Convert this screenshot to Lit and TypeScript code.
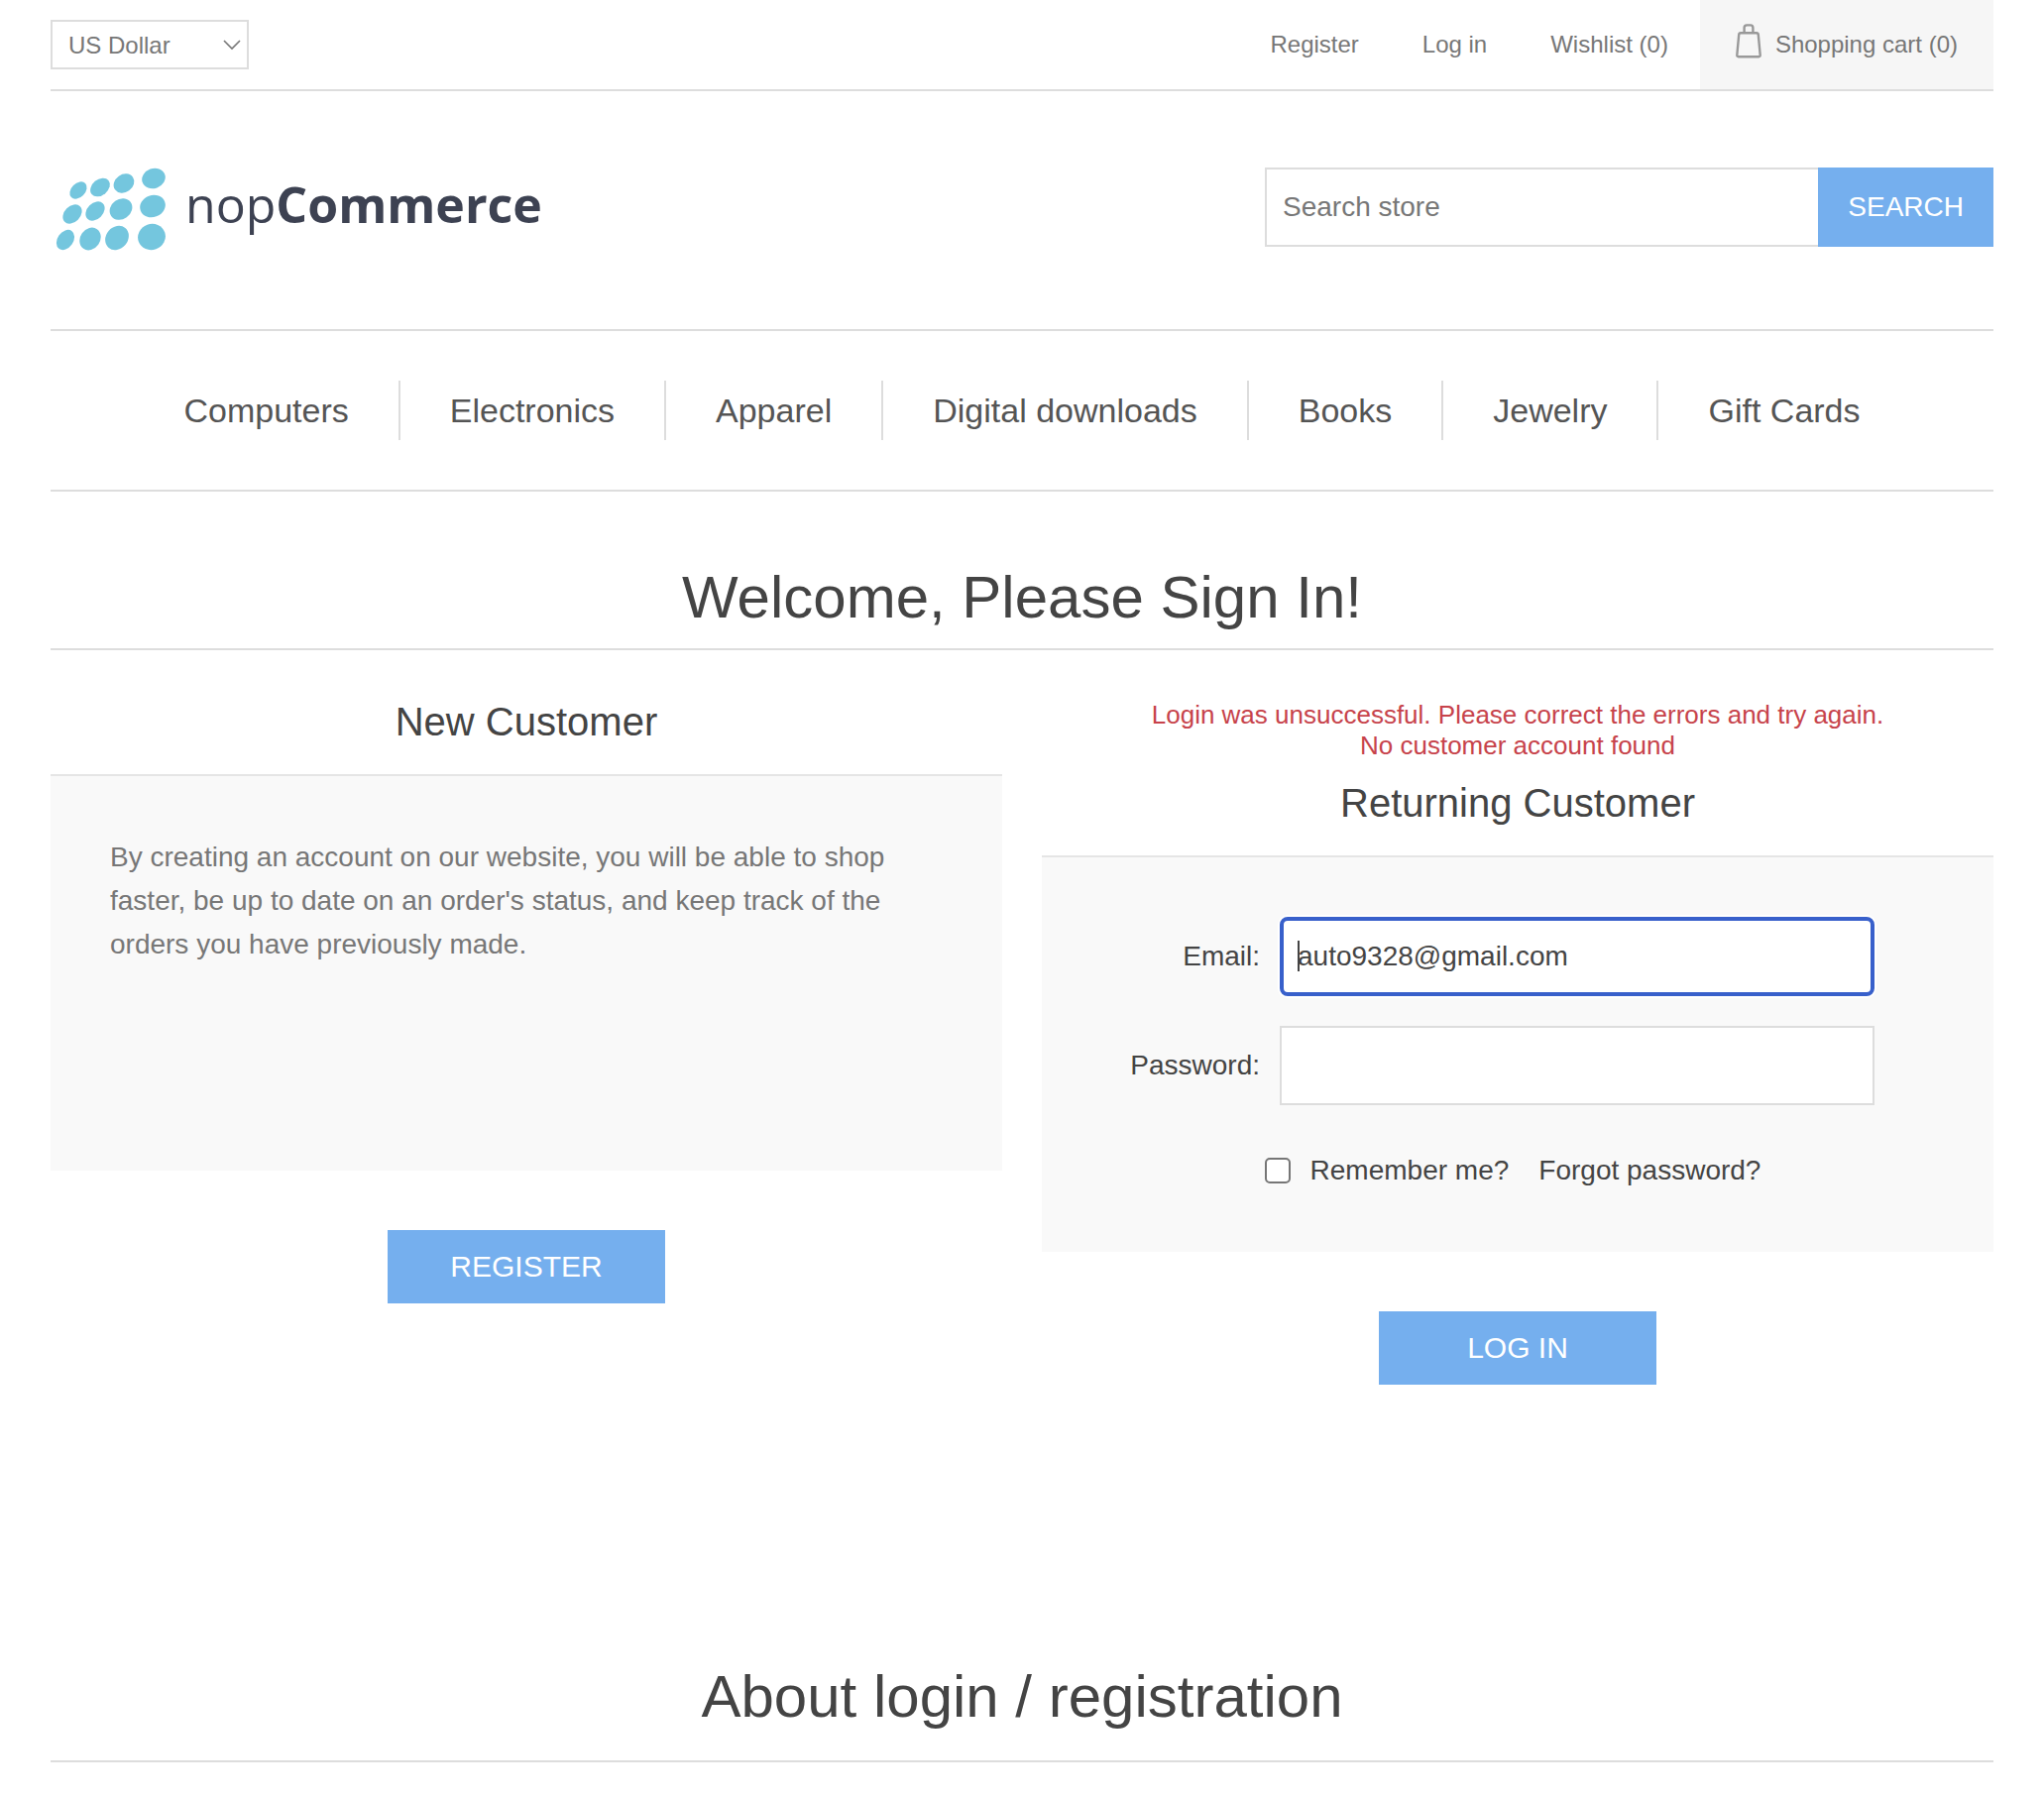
import { LitElement, html, css, svg } from "lit";
import { customElement, state } from "lit/decorators.js";

const CATEGORIES = [
  "Computers",
  "Electronics",
  "Apparel",
  "Digital downloads",
  "Books",
  "Jewelry",
  "Gift Cards",
];

/* Logo dots: centre x, centre y, long radius, short radius, rotation */
const DOTS: [number, number, number, number, number][] = [
  [28, 23, 10, 7, -45],
  [50, 20, 11, 8, -40],
  [74, 16, 11, 9, -35],
  [104, 11, 12, 10, -20],
  [22, 47, 11, 8, -45],
  [45, 44, 11, 8, -45],
  [71, 42, 12, 10, -35],
  [103, 39, 13, 11, -20],
  [15, 73, 11, 8, -55],
  [40, 72, 12, 10, -55],
  [67, 71, 13, 11, -50],
  [102, 70, 14, 13, -20],
];

@customElement("shop-header")
export class ShopHeader extends LitElement {
  static styles = css`
    :host {
      display: block;
    }
    .upper {
      display: flex;
      justify-content: space-between;
      align-items: center;
      flex-wrap: wrap;
      border-bottom: 2px solid #ddd;
      font-size: 24px;
      color: #777;
    }
    .currency {
      position: relative;
    }
    .currency select {
      appearance: none;
      box-sizing: border-box;
      width: 200px;
      height: 50px;
      padding: 0 16px;
      border: 2px solid #ddd;
      border-radius: 0;
      background: #fff;
      font: inherit;
      color: inherit;
    }
    .chevron {
      position: absolute;
      right: 8px;
      top: 20px;
      pointer-events: none;
    }
    .links {
      display: flex;
      flex-wrap: wrap;
      list-style: none;
      margin: 0;
      padding: 0;
      line-height: 90px;
    }
    .links a {
      display: block;
      padding: 0 32px;
      color: inherit;
      text-decoration: none;
    }
    .links .cart {
      display: flex;
      gap: 14px;
      padding: 0 36px;
      background: #f6f6f6;
    }
    .bag {
      margin-top: 24px;
    }
    .lower {
      display: flex;
      justify-content: space-between;
      align-items: flex-start;
      flex-wrap: wrap;
      gap: 24px;
      padding: 77px 0 79px;
    }
    .logo {
      display: block;
      height: 84px;
    }
    .wordmark {
      font-family: "Open Sans", "Noto Sans", sans-serif;
      font-size: 50px;
      fill: #3d4252;
    }
    .strong {
      font-weight: 700;
    }
    .search {
      display: flex;
      flex: 0 1 735px;
      height: 80px;
    }
    .search input {
      flex: 1;
      min-width: 0;
      box-sizing: border-box;
      padding: 0 16px;
      border: 2px solid #ddd;
      border-right: 0;
      border-radius: 0;
      font: inherit;
      font-size: 28px;
      color: #777;
    }
    .search input::placeholder {
      color: #777;
      opacity: 1;
    }
    .search button {
      padding: 0 30px;
      border: 0;
      background: #75afee;
      color: #fff;
      font: inherit;
      font-size: 28px;
      text-transform: uppercase;
    }
    .menu {
      display: flex;
      flex-wrap: wrap;
      justify-content: center;
      list-style: none;
      margin: 0;
      padding: 50px 0;
      border-top: 2px solid #ddd;
      border-bottom: 2px solid #ddd;
      font-size: 34px;
      line-height: 60px;
    }
    .menu li + li {
      border-left: 2px solid #ddd;
    }
    .menu a {
      display: block;
      padding: 0 50px;
      color: #555;
      text-decoration: none;
    }
  `;

  render() {
    return html`
      <header>
        <div class="upper">
          <div class="currency">
            <select aria-label="Currency">
              <option selected>US Dollar</option>
              <option>Euro</option>
            </select>
            <svg class="chevron" width="18" height="11" viewBox="0 0 18 11" fill="none" stroke="#777" stroke-width="1.6">
              <path d="M1 1L9 9L17 1" />
            </svg>
          </div>
          <ul class="links">
            <li><a href="#register">Register</a></li>
            <li><a href="#login">Log in</a></li>
            <li><a href="#wishlist">Wishlist (0)</a></li>
            <li>
              <a class="cart" href="#cart">
                <svg class="bag" width="26" height="36" viewBox="0 0 26 36" fill="none" stroke="#999" stroke-width="2.4" stroke-linejoin="round">
                  <path d="M5 9.2H21Q22.6 9.2 22.8 11L24.7 31.5Q24.8 33.2 23.2 33.2H2.8Q1.2 33.2 1.3 31.5L3.2 11Q3.4 9.2 5 9.2Z" />
                  <path d="M8.6 9V4Q8.6 1.4 11.2 1.4H14.8Q17.4 1.4 17.4 4V9" />
                </svg>
                Shopping cart (0)
              </a>
            </li>
          </ul>
        </div>
        <div class="lower">
          <a href="#home" aria-label="nopCommerce">
            <svg class="logo" width="500" height="84" viewBox="0 0 500 84">
              <g fill="#74c6de">
                ${DOTS.map(
                  ([x, y, rx, ry, turn]) =>
                    svg`<ellipse cx=${x} cy=${y} rx=${rx} ry=${ry} transform="rotate(${turn} ${x} ${y})" />`
                )}
              </g>
              <text class="wordmark" x="136" y="56">nop<tspan class="strong">Commerce</tspan></text>
            </svg>
          </a>
          <form class="search" @submit=${(e: Event) => e.preventDefault()}>
            <input type="text" placeholder="Search store" aria-label="Search store" />
            <button type="submit">Search</button>
          </form>
        </div>
        <nav>
          <ul class="menu">
            ${CATEGORIES.map((name) => html`<li><a href="#${name.toLowerCase().replace(" ", "-")}">${name}</a></li>`)}
          </ul>
        </nav>
      </header>
    `;
  }
}

@customElement("sign-in-page")
export class SignInPage extends LitElement {
  @state() private email = "auto9328@gmail.com";

  static styles = css`
    :host {
      display: block;
      color: #444;
    }
    h1,
    h2,
    p {
      margin: 0;
      font-weight: 400;
    }
    h1 {
      border-bottom: 2px solid #ddd;
      font-size: 60px;
      line-height: 70px;
      text-align: center;
    }
    .welcome {
      padding: 72px 0 16px;
    }
    .about {
      padding: 0 0 29px;
    }
    .columns {
      display: grid;
      grid-template-columns: repeat(auto-fit, minmax(min(100%, 880px), 1fr));
      gap: 40px;
      align-items: start;
      padding: 50px 0 280px;
    }
    h2 {
      padding-bottom: 30px;
      font-size: 40px;
      line-height: 45px;
      text-align: center;
    }
    .errors {
      margin-bottom: 20px;
      color: #c7434b;
      font-size: 26px;
      line-height: 31px;
      text-align: center;
    }
    .panel {
      box-sizing: border-box;
      min-height: 400px;
      padding: 60px;
      border-top: 2px solid #e5e5e5;
      background: #f9f9f9;
      font-size: 28px;
    }
    .intro {
      color: #777;
      line-height: 44px;
    }
    .field {
      display: grid;
      grid-template-columns: 160px minmax(0, 600px);
      gap: 20px;
      align-items: center;
      margin-bottom: 30px;
    }
    .field label {
      text-align: right;
    }
    .control {
      position: relative;
    }
    .control input {
      display: block;
      box-sizing: border-box;
      width: 100%;
      height: 80px;
      padding: 0 16px;
      border: 2px solid #ddd;
      border-radius: 0;
      background: #fff;
      color: inherit;
      font: inherit;
    }
    .control .active {
      padding: 0 14px;
      border: 4px solid #3860cb;
      border-radius: 8px;
      box-shadow: 0 0 0 2px #fff;
      outline: 0;
    }
    .caret {
      position: absolute;
      left: 18px;
      top: 24px;
      width: 2px;
      height: 31px;
      background: #444;
    }
    .options {
      display: flex;
      flex-wrap: wrap;
      align-items: center;
      justify-content: center;
      gap: 30px;
      padding: 16px 10px 0 0;
      line-height: 40px;
    }
    .remember {
      display: flex;
      align-items: center;
      gap: 20px;
    }
    .remember input {
      appearance: none;
      box-sizing: border-box;
      width: 26px;
      height: 26px;
      margin: 0;
      border: 2px solid #767676;
      border-radius: 5px;
      background: #fff;
    }
    .options a {
      color: inherit;
      text-decoration: none;
    }
    .action {
      display: block;
      width: 280px;
      height: 74px;
      margin: 60px auto 0;
      padding: 0;
      border: 0;
      background: #75afee;
      color: #fff;
      font: inherit;
      font-size: 30px;
      text-transform: uppercase;
    }
  `;

  render() {
    return html`
      <main>
        <h1 class="welcome">Welcome, Please Sign In!</h1>
        <div class="columns">
          <section>
            <h2>New Customer</h2>
            <div class="panel">
              <p class="intro">
                By creating an account on our website, you will be able to shop faster, be up to date on an order's
                status, and keep track of the orders you have previously made.
              </p>
            </div>
            <button class="action" type="button">Register</button>
          </section>
          <form @submit=${(e: Event) => e.preventDefault()}>
            <div class="errors" role="alert">
              <p>Login was unsuccessful. Please correct the errors and try again.</p>
              <p>No customer account found</p>
            </div>
            <h2>Returning Customer</h2>
            <div class="panel">
              <div class="field">
                <label for="email">Email:</label>
                <div class="control">
                  <input
                    id="email"
                    class="active"
                    type="email"
                    .value=${this.email}
                    @input=${(e: Event) => (this.email = (e.target as HTMLInputElement).value)}
                  />
                  <span class="caret"></span>
                </div>
              </div>
              <div class="field">
                <label for="password">Password:</label>
                <div class="control"><input id="password" type="password" /></div>
              </div>
              <div class="options">
                <label class="remember"><input type="checkbox" />Remember me?</label>
                <a href="#forgot">Forgot password?</a>
              </div>
            </div>
            <button class="action" type="submit">Log in</button>
          </form>
        </div>
        <h1 class="about">About login / registration</h1>
      </main>
    `;
  }
}

@customElement("app-root")
export class AppRoot extends LitElement {
  static styles = css`
    :host {
      display: block;
      box-sizing: border-box;
      max-width: 2000px;
      margin: 0 auto;
      padding: 0 20px 36px;
      background: #fff;
      font-family: "Liberation Sans", Arial, Helvetica, sans-serif;
    }
  `;

  render() {
    return html`
      <shop-header></shop-header>
      <sign-in-page></sign-in-page>
    `;
  }
}
